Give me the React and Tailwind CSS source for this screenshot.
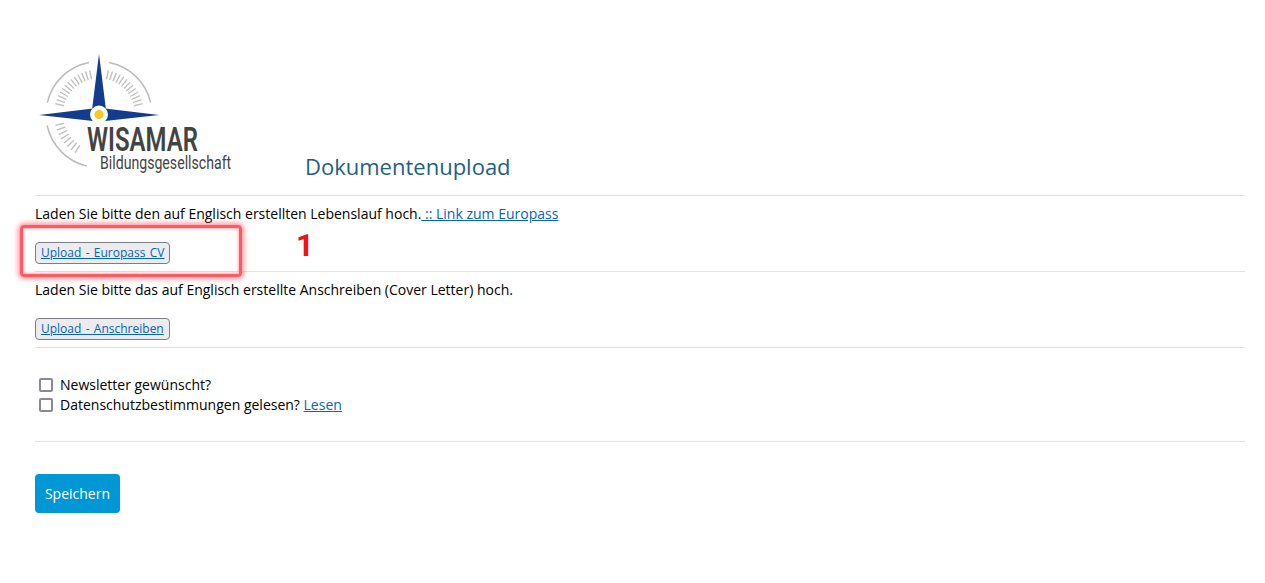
const f = { fontFamily: '"Open Sans", sans-serif' };

function polar(r, deg) {
  const a = (deg * Math.PI) / 180;
  return [64 + r * Math.cos(a), 64.5 + r * Math.sin(a)];
}
function arc(from, to) {
  const [x1, y1] = polar(53, from);
  const [x2, y2] = polar(53, to);
  return `M${x1} ${y1}A53 53 0 0 1 ${x2} ${y2}`;
}
function ticks(from, to, n) {
  return Array.from({ length: n }, (_, i) => {
    const d = from + ((to - from) * i) / (n - 1);
    const [x1, y1] = polar(36, d);
    const [x2, y2] = polar(45, d);
    return <line key={`${from}-${i}`} x1={x1} y1={y1} x2={x2} y2={y2} />;
  });
}

function Logo() {
  return (
    <svg width="200" height="130" viewBox="0 0 200 130" className="block shrink-0">
      <g fill="none" stroke="#bcbcbc" strokeWidth="1.5">
        <path d={arc(193, 259)} />
        <path d={arc(281, 347)} />
        <path d={arc(103, 168)} />
      </g>
      <g stroke="#c0c0c0" strokeWidth="1.4">
        {ticks(194, 258, 13)}
        {ticks(282, 346, 13)}
        {ticks(122, 166, 8)}
      </g>
      <path d="M64 4L71 60L57 60Z" fill="#143c8c" />
      <path d="M4 65L58 58.500L58 71Z" fill="#143c8c" />
      <path d="M124 65L70 58.500L70 71Z" fill="#143c8c" />
      <circle cx="64" cy="64.500" r="9" fill="#ffffff" />
      <circle cx="64" cy="64.500" r="4.500" fill="#fbc81e" />
      <text transform="translate(52 101) scale(0.705 1)" fontFamily="Roboto, sans-serif" fontWeight="600" fontSize="34" fill="#434343">WISAMAR</text>
      <text transform="translate(65 119) scale(0.785 1)" fontFamily="Roboto, sans-serif" fontWeight="400" fontSize="18" fill="#434343">Bildungsgesellschaft</text>
    </svg>
  );
}

function UploadButton({ children }) {
  return (
    <button className="block h-[22px] px-[5px] rounded-[4px] border border-[#7d7d88] bg-[#ececef] text-[12px] leading-[18px] text-[#0563c1] underline [word-spacing:1.2px]" style={f}>
      {children}
    </button>
  );
}

function Section({ children, button }) {
  return (
    <div className="h-[76px] border-b border-[#e3e3e3]">
      <p className="pt-[8px] h-[46px] text-[14px] leading-[20px] text-black">{children}</p>
      <UploadButton>{button}</UploadButton>
    </div>
  );
}

function Check({ children }) {
  return (
    <div className="flex items-center h-[20px] text-[14px] text-black">
      <span className="ml-[4px] mr-[7px] w-[14px] h-[14px] rounded-[2px] border-2 border-[#8a8894] bg-white" />
      <span className="-mt-[2px]">{children}</span>
    </div>
  );
}

export default function App() {
  return (
    <div className="relative min-h-[583px] bg-white pl-[35px] pr-[20px]" style={f}>
      <div className="pt-[50px] h-[196px] border-b border-[#e3e3e3] flex items-start">
        <Logo />
        <h1 className="ml-[70px] mt-[102px] text-[22px] leading-[28px] font-normal text-[#1c6282]">Dokumentenupload</h1>
      </div>

      <Section button="Upload - Europass CV">
        Laden Sie bitte den auf Englisch erstellten Lebenslauf hoch.<a href="#" className="text-[#0563c1] underline"> :: Link zum Europass</a>
      </Section>
      <Section button="Upload - Anschreiben">
        Laden Sie bitte das auf Englisch erstellte Anschreiben (Cover Letter) hoch.
      </Section>

      <div className="pt-[27px] h-[94px] border-b border-[#e3e3e3]">
        <Check>Newsletter gewünscht?</Check>
        <Check>
          Datenschutzbestimmungen gelesen? <a href="#" className="text-[#0563c1] underline">Lesen</a>
        </Check>
      </div>

      <button className="mt-[32px] w-[85px] h-[39px] rounded-[4px] bg-[#0097d6] text-white text-[14px]">Speichern</button>

      <div className="absolute left-[20px] top-[225px] w-[222px] h-[52px] rounded-[4px] border-[3px] border-[#ff5a64] shadow-[0_0_5px_2px_rgba(255,80,90,0.6),inset_0_0_3px_1px_rgba(255,80,90,0.45)]" />
      <span className="absolute left-[296px] top-[228px] text-[31px] leading-[36px] font-bold text-[#f01414]" style={{ fontFamily: 'Roboto, sans-serif' }}>1</span>
    </div>
  );
}
